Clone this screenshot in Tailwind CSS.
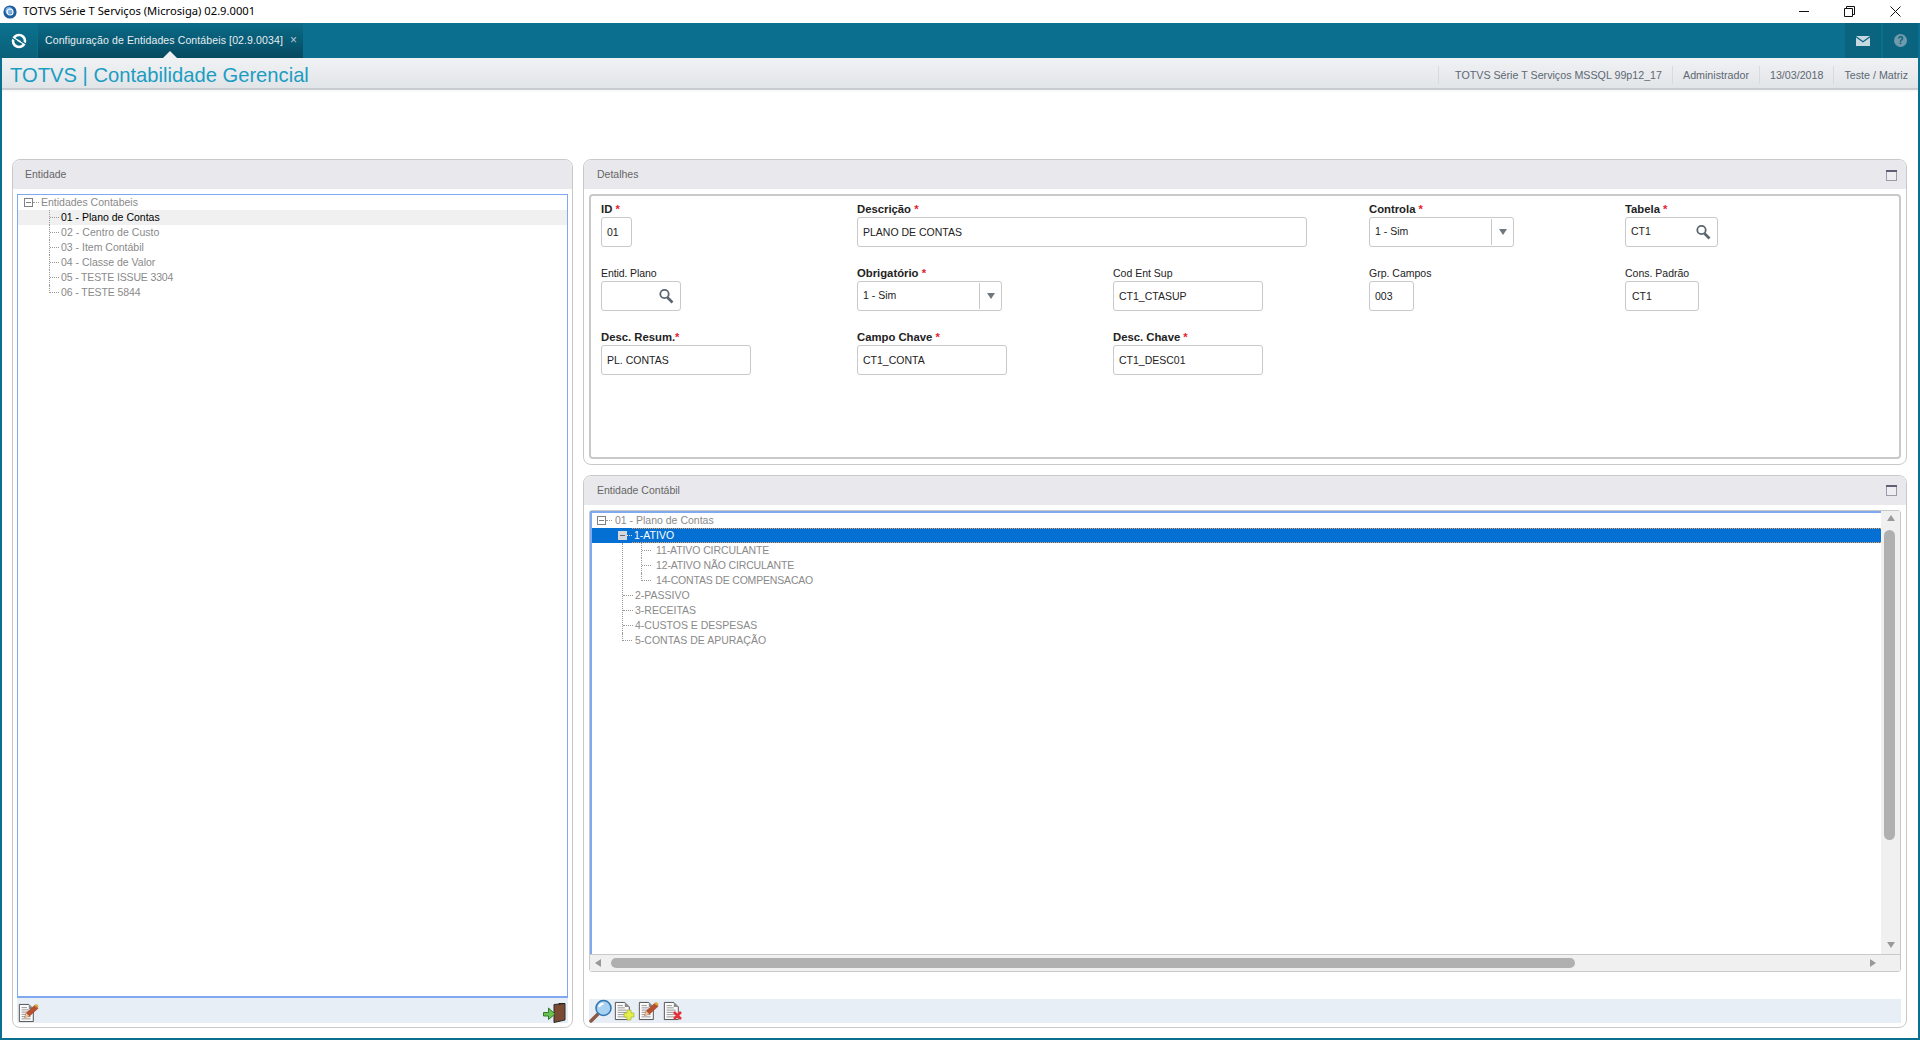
<!DOCTYPE html>
<html lang="pt-BR">
<head>
<meta charset="UTF-8">
<title>TOTVS Série T Serviços (Microsiga) 02.9.0001</title>
<script src="https://cdn.jsdelivr.net/npm/@tailwindcss/browser@4"></script>
</head>
<body class="h-screen overflow-hidden bg-white font-['Liberation_Sans',Arial,sans-serif] text-[10.5px] text-[#222]">

<!-- icons used more than once -->
<svg class="hidden">
  <symbol id="doc" viewBox="0 0 20 20">
    <path d="M1.5 .5H12L17 5.5V19.5H1.5Z" fill="#fbfbfb" stroke="#444"/>
    <path d="M12 .5L17 5.5H12Z" fill="#8a8a8a"/>
    <path d="M4 4H10M4 6.5H12M4 9H14M4 11.5H14M4 14H14M4 16.5H14" stroke="#8d8d8d"/>
  </symbol>
  <symbol id="pencil" viewBox="0 0 20 20">
    <path d="M2 18L4 12.5L15 2.5L19 6.5L8 16.5Z" fill="#b9502d" stroke="#8a3a22" stroke-width=".6"/>
    <path d="M14 3.5L15.5 1.5Q18.5 1 19.5 4L18 6Z" fill="#d8a93c"/>
    <path d="M2 18L4 12.5L8 16.5Z" fill="#e9c99a"/>
  </symbol>
  <symbol id="lupa" viewBox="0 0 16 16">
    <circle cx="6.5" cy="6" r="4.2" fill="none" stroke="#5a6570" stroke-width="1.8"/>
    <path d="M9.5 9.5L14.5 14.5" stroke="#5a6570" stroke-width="2.6"/>
  </symbol>
  <symbol id="minimizar" viewBox="0 0 11 11">
    <rect x=".5" y=".5" width="10" height="10" fill="#eeeef2" stroke="#9a9aa8"/>
    <rect x="0" y="0" width="11" height="2" fill="#5f5f74"/>
  </symbol>
</svg>

<div class="flex h-full flex-col">

  <!-- window title -->
  <div class="flex h-[23px] shrink-0 items-center bg-white">
    <svg class="ml-[3px] h-[14px] w-[14px]" viewBox="0 0 14 14">
      <circle cx="7" cy="7" r="6.6" fill="#1d5f9e"/>
      <circle cx="6" cy="5.5" r="3.6" fill="#7fb4e6"/>
      <circle cx="7" cy="7" r="3" fill="none" stroke="#fff" stroke-width="1.2"/>
    </svg>
    <span class="ml-[6px] font-['Noto_Sans',sans-serif] text-[11.2px] text-black">TOTVS Série T Serviços (Microsiga) 02.9.0001</span>
    <div class="ml-auto flex items-center">
      <svg class="h-[11px] w-[10px]" viewBox="0 0 10 11"><path d="M0 5.5H10" stroke="#111"/></svg>
      <svg class="ml-[35px] h-[11px] w-[11px]" viewBox="0 0 11 11" fill="none" stroke="#111"><path d="M.5 2.5H8.5V10.5H.5Z M2.5 2.5V.5H10.5V8.5H8.5"/></svg>
      <svg class="ml-[35px] mr-[19px] h-[11px] w-[11px]" viewBox="0 0 11 11" stroke="#111"><path d="M.5 .5L10.5 10.5M10.5 .5L.5 10.5"/></svg>
    </div>
  </div>

  <!-- teal tab bar -->
  <div class="flex h-[35px] shrink-0 bg-[#0b708f]">
    <div class="flex w-[37px] items-center justify-center bg-gradient-to-b from-[#0b7290] to-[#0a6078]">
      <svg class="h-[16px] w-[16px]" viewBox="0 0 16 16" fill="none">
        <circle cx="8" cy="8" r="6" stroke="#fff" stroke-width="2.6"/>
        <path d="M3.5 5.5L12.5 10.5" stroke="#fff" stroke-width="1.6"/>
        <path d="M1 5L6 8M15 11L10 8" stroke="#0b6c88" stroke-width="1.2"/>
      </svg>
    </div>
    <div class="relative ml-px flex w-[265px] items-center bg-gradient-to-b from-[#0b6c89] to-[#064a60] pl-[7px] text-[#e6eef2]">
      <span class="tracking-[0.12px]">Configuração de Entidades Contábeis [02.9.0034]</span>
      <span class="ml-[7px] mb-[2px] text-[12px] leading-none text-[#b7cad3]">×</span>
      <span class="absolute bottom-0 left-[125px] h-0 w-0 border-x-[7px] border-b-[7px] border-x-transparent border-b-[#eef0f2]"></span>
    </div>
    <div class="ml-auto mr-[2px] flex">
      <div class="flex w-[36px] items-center justify-center bg-[#0a6480]">
        <svg class="h-[10px] w-[14px]" viewBox="0 0 14 10"><path d="M0 0H14L7 5Z" fill="#c7d9e0"/><path d="M0 1.5L7 6.5L14 1.5V10H0Z" fill="#c7d9e0"/></svg>
      </div>
      <div class="ml-[2px] flex w-[35px] items-center justify-center bg-[#0a6480]">
        <span class="flex h-[13px] w-[13px] items-center justify-center rounded-full bg-[#6f9bad] text-[10px] font-bold leading-none text-[#0a5f78]">?</span>
      </div>
    </div>
  </div>

  <!-- application frame -->
  <div class="flex min-h-0 flex-1 flex-col border-x-2 border-b-2 border-[#0b708f]">

    <header class="flex h-[32px] shrink-0 items-center border-b-2 border-[#c9cdd1] bg-gradient-to-b from-[#f0f2f4] to-[#e2e5e8] pl-[8px] pt-[4px]">
      <h1 class="text-[20.2px] leading-none text-[#1b9dc2]">TOTVS | Contabilidade Gerencial</h1>
      <div class="ml-auto flex h-[18px] items-center text-[10.7px] text-[#5d6873]">
        <span class="flex h-full items-center border-l border-[#d8dbde] pl-[16px] pr-[10px]">TOTVS Série T Serviços MSSQL 99p12_17</span>
        <span class="flex h-full items-center border-l border-[#d8dbde] px-[10px]">Administrador</span>
        <span class="flex h-full items-center border-l border-[#d8dbde] px-[10px]">13/03/2018</span>
        <span class="flex h-full items-center border-l border-[#d8dbde] px-[10px]">Teste / Matriz</span>
      </div>
    </header>

    <div class="h-[69px] shrink-0 bg-gradient-to-b from-[#f6f6f6] to-white to-[4%]"></div>

    <main class="flex min-h-0 flex-1 gap-[10px] pb-[10px] pl-[10px] pr-[11px]">

      <!-- Entidade -->
      <section class="flex w-[561px] shrink-0 flex-col rounded-lg border border-[#c9c9c9] pb-[4px]">
        <div class="flex h-[29px] shrink-0 items-center rounded-t-lg bg-[#e9e9ed] pl-[12px] pt-px text-[#666]">Entidade</div>
        <div class="mx-[4px] mt-[5px] min-h-0 flex-1 border border-b-2 border-[#7ea9ef]">
          <div class="flex h-[15px] items-center pl-[6px] text-[#8a8a8a]">
            <span class="flex h-[9px] w-[9px] items-center justify-center border border-[#808080]"><span class="h-px w-[5px] bg-[#808080]"></span></span>
            <span class="w-[6px] border-t border-dotted border-[#999]"></span>
            <span class="ml-[2px]">Entidades Contabeis</span>
          </div>
          <div>
            <div class="flex h-[15px] items-center bg-[#f0f0f0] pl-[31px] text-black">
              <span class="flex h-full w-[10px] items-center border-l border-dotted border-[#999]"><span class="w-full border-t border-dotted border-[#999]"></span></span>
              <span class="ml-[2px]">01 - Plano de Contas</span>
            </div>
            <div class="flex h-[15px] items-center pl-[31px] text-[#8a8a8a]">
              <span class="flex h-full w-[10px] items-center border-l border-dotted border-[#999]"><span class="w-full border-t border-dotted border-[#999]"></span></span>
              <span class="ml-[2px] tracking-[0.05px]">02 - Centro de Custo</span>
            </div>
            <div class="flex h-[15px] items-center pl-[31px] text-[#8a8a8a]">
              <span class="flex h-full w-[10px] items-center border-l border-dotted border-[#999]"><span class="w-full border-t border-dotted border-[#999]"></span></span>
              <span class="ml-[2px]">03 - Item Contábil</span>
            </div>
            <div class="flex h-[15px] items-center pl-[31px] text-[#8a8a8a]">
              <span class="flex h-full w-[10px] items-center border-l border-dotted border-[#999]"><span class="w-full border-t border-dotted border-[#999]"></span></span>
              <span class="ml-[2px]">04 - Classe de Valor</span>
            </div>
            <div class="flex h-[15px] items-center pl-[31px] text-[#8a8a8a]">
              <span class="flex h-full w-[10px] items-center border-l border-dotted border-[#999]"><span class="w-full border-t border-dotted border-[#999]"></span></span>
              <span class="ml-[2px] tracking-[-0.15px]">05 - TESTE ISSUE 3304</span>
            </div>
            <div class="flex h-[15px] items-start pl-[31px] text-[#8a8a8a]">
              <span class="h-[8px] w-[10px] border-b border-l border-dotted border-[#999]"></span>
              <span class="ml-[2px] tracking-[-0.1px]">06 - TESTE 5844</span>
            </div>
          </div>
        </div>
        <div class="mx-[4px] flex h-[25px] shrink-0 items-end justify-between bg-[#e8eef5]">
          <svg class="ml-[1px] h-[20px] w-[21px]" viewBox="0 0 21 20"><use href="#doc" width="18" height="20"/><use href="#pencil" x="5" y="0" width="16" height="16"/></svg>
          <svg class="mr-[2px] h-[20px] w-[23px]" viewBox="0 0 23 20">
            <path d="M11 1.5L22 .5V17L11 19.5Z" fill="#7a4a32" stroke="#2a2a2a"/>
            <path d="M22 .5H16V2" fill="none" stroke="#222"/>
            <path d="M.5 9.5H5.5V5L12 11L5.5 16.5V13H.5Z" fill="#6cc24f" stroke="#2e7a2a"/>
          </svg>
        </div>
      </section>

      <div class="flex min-w-0 flex-1 flex-col gap-[10px]">

        <!-- Detalhes -->
        <section class="flex h-[306px] shrink-0 flex-col rounded-lg border border-[#c9c9c9] pb-[5px]">
          <div class="flex h-[29px] shrink-0 items-center justify-between rounded-t-lg bg-[#e9e9ed] pl-[13px] pr-[9px] pt-px text-[#666]">
            Detalhes
            <svg class="h-[11px] w-[11px]"><use href="#minimizar"/></svg>
          </div>
          <div class="mx-[5px] mt-[5px] grid flex-1 grid-cols-[256px_256px_256px_256px_1fr] content-start gap-y-[19px] rounded border-2 border-[#c9c9c9] pl-[10px] pt-[6px]">

            <div>
              <label class="block h-[15px] text-[11.3px] font-bold leading-[15px]">ID <span class="text-[#e8202a]">*</span></label>
              <div class="flex h-[30px] w-[31px] items-center rounded-[3px] border border-[#c9c9c9] pl-[5px] pt-px">01</div>
            </div>
            <div class="col-span-2">
              <label class="block h-[15px] text-[11.3px] font-bold leading-[15px]">Descrição <span class="text-[#e8202a]">*</span></label>
              <div class="flex h-[30px] w-[450px] items-center rounded-[3px] border border-[#c9c9c9] pl-[5px] pt-px">PLANO DE CONTAS</div>
            </div>
            <div>
              <label class="block h-[15px] text-[11.3px] font-bold leading-[15px]">Controla <span class="text-[#e8202a]">*</span></label>
              <div class="flex h-[30px] w-[145px] items-center rounded-[3px] border border-[#c9c9c9] pl-[5px]">
                1 - Sim
                <span class="ml-auto flex h-[26px] w-[22px] items-center justify-center border-l border-[#c9c9c9]"><span class="h-0 w-0 border-x-[4px] border-t-[6px] border-x-transparent border-t-[#6c7780]"></span></span>
              </div>
            </div>
            <div>
              <label class="block h-[15px] text-[11.3px] font-bold leading-[15px]">Tabela <span class="text-[#e8202a]">*</span></label>
              <div class="flex h-[30px] w-[93px] items-center rounded-[3px] border border-[#c9c9c9] pl-[5px]">
                CT1
                <svg class="ml-auto mr-[6px] mb-px h-[16px] w-[16px]"><use href="#lupa"/></svg>
              </div>
            </div>

            <div>
              <label class="block h-[15px] leading-[15px] tracking-[-0.1px]">Entid. Plano</label>
              <div class="flex h-[30px] w-[80px] items-center rounded-[3px] border border-[#c9c9c9]">
                <svg class="ml-auto mr-[6px] mb-px h-[16px] w-[16px]"><use href="#lupa"/></svg>
              </div>
            </div>
            <div>
              <label class="block h-[15px] text-[11.3px] font-bold leading-[15px]">Obrigatório <span class="text-[#e8202a]">*</span></label>
              <div class="flex h-[30px] w-[145px] items-center rounded-[3px] border border-[#c9c9c9] pl-[5px]">
                1 - Sim
                <span class="ml-auto flex h-[26px] w-[22px] items-center justify-center border-l border-[#c9c9c9]"><span class="h-0 w-0 border-x-[4px] border-t-[6px] border-x-transparent border-t-[#6c7780]"></span></span>
              </div>
            </div>
            <div>
              <label class="block h-[15px] leading-[15px]">Cod Ent Sup</label>
              <div class="flex h-[30px] w-[150px] items-center rounded-[3px] border border-[#c9c9c9] pl-[5px] pt-px">CT1_CTASUP</div>
            </div>
            <div>
              <label class="block h-[15px] leading-[15px]">Grp. Campos</label>
              <div class="flex h-[30px] w-[45px] items-center rounded-[3px] border border-[#c9c9c9] pl-[5px] pt-px">003</div>
            </div>
            <div>
              <label class="block h-[15px] leading-[15px]">Cons. Padrão</label>
              <div class="flex h-[30px] w-[74px] items-center rounded-[3px] border border-[#c9c9c9] pl-[6px] pt-px">CT1</div>
            </div>

            <div>
              <label class="block h-[15px] text-[11.3px] font-bold leading-[15px]">Desc. Resum.<span class="text-[#e8202a]">*</span></label>
              <div class="flex h-[30px] w-[150px] items-center rounded-[3px] border border-[#c9c9c9] pl-[5px] pt-px">PL. CONTAS</div>
            </div>
            <div>
              <label class="block h-[15px] text-[11.3px] font-bold leading-[15px]">Campo Chave <span class="text-[#e8202a]">*</span></label>
              <div class="flex h-[30px] w-[150px] items-center rounded-[3px] border border-[#c9c9c9] pl-[5px] pt-px">CT1_CONTA</div>
            </div>
            <div>
              <label class="block h-[15px] text-[11.3px] font-bold leading-[15px]">Desc. Chave <span class="text-[#e8202a]">*</span></label>
              <div class="flex h-[30px] w-[150px] items-center rounded-[3px] border border-[#c9c9c9] pl-[5px] pt-px">CT1_DESC01</div>
            </div>
          </div>
        </section>

        <!-- Entidade Contabil -->
        <section class="flex min-h-0 flex-1 flex-col rounded-lg border border-[#c9c9c9] pb-[4px]">
          <div class="flex h-[29px] shrink-0 items-center justify-between rounded-t-lg bg-[#e9e9ed] pl-[13px] pr-[9px] text-[#666]">
            Entidade Contábil
            <svg class="h-[11px] w-[11px]"><use href="#minimizar"/></svg>
          </div>
          <div class="mx-[5px] mt-[5px] flex h-[462px] shrink-0 flex-col rounded-[3px] border border-[#c9c9c9]">
            <div class="flex min-h-0 flex-1">
              <div class="min-w-0 flex-1 border-l-2 border-t-2 border-[#7ea9ef]">
                <div class="flex h-[15px] items-center pl-[5px] text-[#8a8a8a]">
                  <span class="flex h-[9px] w-[9px] items-center justify-center border border-[#808080]"><span class="h-px w-[5px] bg-[#808080]"></span></span>
                  <span class="w-[6px] border-t border-dotted border-[#999]"></span>
                  <span class="ml-[3px]">01 - Plano de Contas</span>
                </div>
                <div class="flex h-[15px] items-center bg-[#0470d3] pl-[26px] text-white">
                  <span class="flex h-[9px] w-[9px] items-center justify-center bg-[#d4d8dc]"><span class="h-px w-[5px] bg-[#666]"></span></span>
                  <span class="w-[5px] border-t border-dotted border-[#ddd]"></span>
                  <span class="flex h-full flex-1 items-center border-y border-dotted border-[#e8a05a] pl-[2px]">1-ATIVO</span>
                </div>
                <!-- children of 1-ATIVO hang from the dotted line of that node -->
                <div class="ml-[30px] border-l border-dotted border-[#999]">
                  <div class="ml-[18px]">
                    <div class="flex h-[15px] items-center text-[#8a8a8a]">
                      <span class="flex h-full w-[10px] items-center border-l border-dotted border-[#999]"><span class="w-full border-t border-dotted border-[#999]"></span></span>
                      <span class="ml-[5px] tracking-[-0.1px]">11-ATIVO CIRCULANTE</span>
                    </div>
                    <div class="flex h-[15px] items-center text-[#8a8a8a]">
                      <span class="flex h-full w-[10px] items-center border-l border-dotted border-[#999]"><span class="w-full border-t border-dotted border-[#999]"></span></span>
                      <span class="ml-[5px] tracking-[-0.15px]">12-ATIVO NÃO CIRCULANTE</span>
                    </div>
                    <div class="flex h-[15px] items-start text-[#8a8a8a]">
                      <span class="h-[8px] w-[10px] border-b border-l border-dotted border-[#999]"></span>
                      <span class="ml-[5px] tracking-[-0.18px]">14-CONTAS DE COMPENSACAO</span>
                    </div>
                  </div>
                  <div class="flex h-[15px] items-center text-[#8a8a8a]"><span class="w-[10px] border-t border-dotted border-[#999]"></span><span class="ml-[2px]">2-PASSIVO</span></div>
                  <div class="flex h-[15px] items-center text-[#8a8a8a]"><span class="w-[10px] border-t border-dotted border-[#999]"></span><span class="ml-[2px]">3-RECEITAS</span></div>
                  <div class="flex h-[15px] items-center text-[#8a8a8a]"><span class="w-[10px] border-t border-dotted border-[#999]"></span><span class="ml-[2px]">4-CUSTOS E DESPESAS</span></div>
                </div>
                <div class="ml-[30px] flex h-[15px] items-start text-[#8a8a8a]">
                  <span class="h-[8px] w-[10px] border-b border-l border-dotted border-[#999]"></span>
                  <span class="ml-[3px]">5-CONTAS DE APURAÇÃO</span>
                </div>
              </div>
              <!-- vertical scrollbar -->
              <div class="flex w-[19px] shrink-0 flex-col items-center bg-[#f0f0f0] pt-[4px]">
                <span class="h-0 w-0 border-x-[4px] border-b-[6px] border-x-transparent border-b-[#999]"></span>
                <span class="ml-[-2px] mt-[9px] h-[310px] w-[11px] rounded-full bg-[#b0b0b0]"></span>
                <span class="mt-auto mb-[6px] h-0 w-0 border-x-[4px] border-t-[6px] border-x-transparent border-t-[#999]"></span>
              </div>
            </div>
            <!-- horizontal scrollbar -->
            <div class="flex h-[17px] shrink-0 items-center border-t border-[#c9c9c9] bg-[#f0f0f0]">
              <span class="ml-[5px] h-0 w-0 border-y-[4px] border-r-[6px] border-y-transparent border-r-[#999]"></span>
              <span class="ml-[10px] h-[10px] w-[964px] rounded-full bg-[#b0b0b0]"></span>
              <span class="ml-[295px] h-0 w-0 border-y-[4px] border-l-[6px] border-y-transparent border-l-[#999]"></span>
            </div>
          </div>
          <div class="mx-[5px] mt-auto flex h-[24px] items-center bg-[#e8eef5]">
            <svg class="h-[24px] w-[24px]" viewBox="0 0 24 24">
              <path d="M2 22L11 13" stroke="#8a5a44" stroke-width="3.5" stroke-linecap="round"/>
              <circle cx="14.5" cy="9" r="7.5" fill="#a9d2f2" stroke="#2f78b4" stroke-width="1.6"/>
              <path d="M10 8Q11 5 14.5 4.5" fill="none" stroke="#fff" stroke-width="2"/>
            </svg>
            <svg class="ml-[1px] h-[20px] w-[21px]" viewBox="0 0 21 20">
              <use href="#doc" width="18" height="20"/>
              <path d="M13 9H17V12H20V16H17V19H13V16H10V12H13Z" fill="#e3f04a" stroke="#9aa82a" stroke-width=".6"/>
            </svg>
            <svg class="ml-[3px] h-[20px] w-[21px]" viewBox="0 0 21 20"><use href="#doc" width="18" height="20"/><use href="#pencil" x="5" y="0" width="16" height="16"/></svg>
            <svg class="ml-[4px] h-[20px] w-[21px]" viewBox="0 0 21 20">
              <use href="#doc" width="18" height="20"/>
              <path d="M11 11L18 18M18 11L11 18" stroke="#e8303a" stroke-width="2.6"/>
            </svg>
          </div>
        </section>
      </div>
    </main>
  </div>
</div>
</body>
</html>
